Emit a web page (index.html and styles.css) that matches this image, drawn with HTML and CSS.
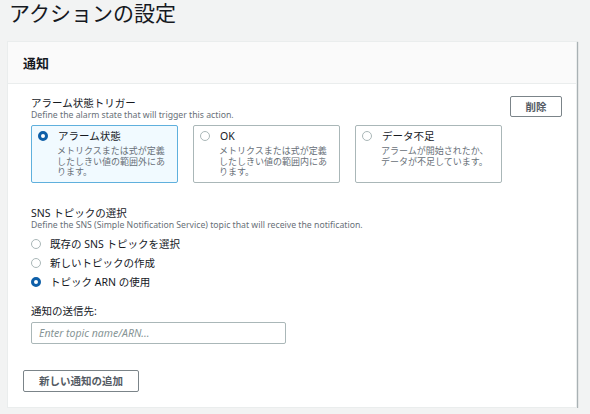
FILE: index.html
```html
<!DOCTYPE html>
<html lang="ja">
<head>
<meta charset="utf-8">
<title>アクションの設定</title>
<link rel="stylesheet" href="styles.css">
</head>
<body>
<h1 class="page-title">アクションの設定</h1>
<section class="panel">
  <header class="panel-header"><h2 class="panel-title">通知</h2></header>
  <div class="panel-body">
    <div class="notification">
      <div class="item-row">
        <div class="field">
          <div class="label">アラーム状態トリガー</div>
          <div class="desc">Define the alarm state that will trigger this action.</div>
          <div class="tiles">
            <div class="tile selected">
              <div class="tile-head"><span class="radio checked"></span><span class="tile-title">アラーム状態</span></div>
              <div class="tile-desc">メトリクスまたは式が定義したしきい値の範囲外にあります。</div>
            </div>
            <div class="tile">
              <div class="tile-head"><span class="radio"></span><span class="tile-title">OK</span></div>
              <div class="tile-desc">メトリクスまたは式が定義したしきい値の範囲内にあります。</div>
            </div>
            <div class="tile">
              <div class="tile-head"><span class="radio"></span><span class="tile-title">データ不足</span></div>
              <div class="tile-desc">アラームが開始されたか、データが不足しています。</div>
            </div>
          </div>
        </div>
        <button class="btn btn-delete">削除</button>
      </div>

      <div class="field sns">
        <div class="label">SNS トピックの選択</div>
        <div class="desc">Define the SNS (Simple Notification Service) topic that will receive the notification.</div>
        <div class="radio-list">
          <div class="radio-row"><span class="radio"></span><span>既存の SNS トピックを選択</span></div>
          <div class="radio-row"><span class="radio"></span><span>新しいトピックの作成</span></div>
          <div class="radio-row"><span class="radio checked"></span><span>トピック ARN の使用</span></div>
        </div>
      </div>

      <div class="field dest">
        <div class="label">通知の送信先:</div>
        <input class="text-input" type="text" placeholder="Enter topic name/ARN...">
      </div>
    </div>
    <button class="btn btn-add">新しい通知の追加</button>
  </div>
</section>
</body>
</html>
```
FILE: styles.css
```css
* { box-sizing: border-box; }
html, body {
  margin: 0;
  padding: 0;
  background: #f2f3f3;
  font-family: "Noto Sans", "Noto Sans CJK JP", sans-serif;
  color: #16191f;
}
body { padding: 0 13px 0 7px; }

.page-title {
  margin: 0 0 14px 2px;
  font-size: 21px;
  line-height: 27px;
  font-weight: 400;
  color: #16191f;
}

.panel {
  background: #fff;
  border: 1px solid #eaeded;
  box-shadow: 1px 1px 1px 0 rgba(0, 28, 36, 0.3);
}
.panel-header {
  background: #fafafa;
  border-bottom: 1px solid #eaeded;
  height: 42px;
  display: flex;
  align-items: center;
  padding-left: 15px;
}
.panel-title {
  margin: 0;
  font-size: 13px;
  font-weight: 700;
  line-height: 16px;
}

.panel-body { padding: 12px 14px 15px 15px; }
.notification { padding-left: 8px; }

.item-row {
  display: flex;
  justify-content: space-between;
  align-items: flex-start;
}

.label {
  font-size: 10.5px;
  line-height: 14px;
  color: #16191f;
}
.desc {
  font-size: 8.7px;
  line-height: 11px;
  color: #687078;
}

.tiles {
  display: grid;
  grid-template-columns: repeat(3, 147px);
  column-gap: 15px;
  margin-top: 4px;
}
.tile {
  border: 1px solid #aab7b8;
  border-radius: 2px;
  padding: 1px 8px 4.5px 6px;
  background: #fff;
}
.tile.selected {
  background: #f1faff;
  border-color: #5fb0dd;
}
.tile-head {
  display: flex;
  align-items: center;
  gap: 10px;
  height: 18px;
}
.tile-title { font-size: 10.5px; line-height: 18px; }
.tile-desc {
  margin-top: 1px;
  padding-left: 19px;
  font-size: 9px;
  line-height: 10.5px;
  color: #687078;
}

.radio {
  flex: none;
  width: 10px;
  height: 10px;
  border-radius: 50%;
  border: 1px solid #aab7b8;
  background: #fff;
}
.radio.checked {
  border: 3px solid #0e5fa8;
}

.btn {
  font-family: "Noto Sans", "Noto Sans CJK JP", sans-serif;
  font-size: 10.5px;
  font-weight: 700;
  color: #545b64;
  background: #fff;
  border: 1px solid #7b8489;
  border-radius: 2px;
  height: 22px;
  padding: 0;
  line-height: 20px;
}
.btn-delete { width: 52px; height: 21px; margin-right: 0; }
.btn-add { width: 116px; margin-top: 26px; display: block; }

.sns { margin-top: 23px; }
.radio-list { margin-top: 3px; }
.radio-row {
  display: flex;
  align-items: center;
  gap: 9px;
  height: 19px;
  font-size: 10.5px;
}

.dest { margin-top: 13px; }
.text-input {
  display: block;
  margin-top: 4px;
  width: 255px;
  height: 22px;
  border: 1px solid #aab7b8;
  border-radius: 2px;
  padding: 0 7px;
  font-family: "Noto Sans", "Noto Sans CJK JP", sans-serif;
  font-size: 10.5px;
  color: #16191f;
  background: #fff;
}
.text-input::placeholder {
  color: #879596;
  font-style: italic;
}
```
